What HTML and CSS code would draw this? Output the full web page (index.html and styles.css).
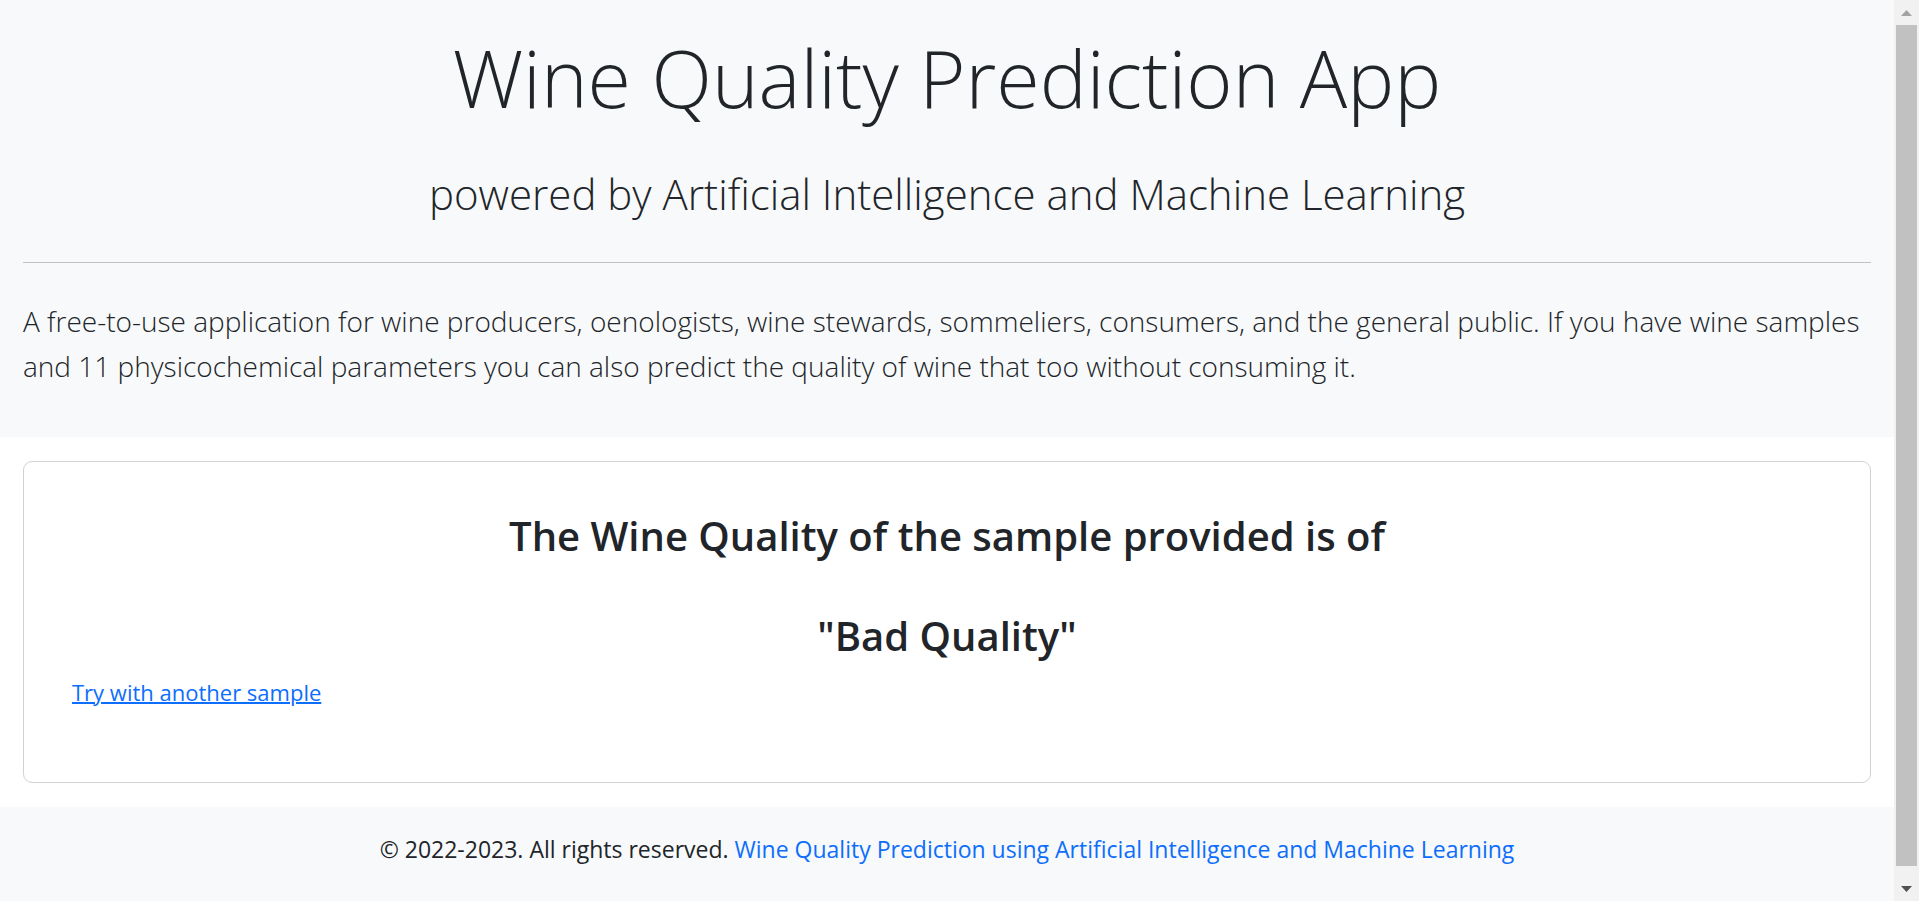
FILE: index.html
```html
<!DOCTYPE html>
<html lang="en">
<head>
<meta charset="utf-8">
<title>Wine Quality Prediction App</title>
<link rel="stylesheet" href="styles.css">
</head>
<body>
<div class="shell">
  <div class="page">
    <header class="hero">
      <h1 class="hero-title">Wine Quality Prediction App</h1>
      <p class="hero-subtitle">powered by Artificial Intelligence and Machine Learning</p>
      <hr class="rule">
      <p class="lead">A free-to-use application for wine producers, oenologists, wine stewards, sommeliers, consumers, and the general public. If you have wine samples and 11 physicochemical parameters you can also predict the quality of wine that too without consuming it.</p>
    </header>
    <main class="main">
      <section class="card">
        <h2 class="result">The Wine Quality of the sample provided is of</h2>
        <h2 class="result">"Bad Quality"</h2>
        <a class="retry" href="#">Try with another sample</a>
      </section>
    </main>
    <footer class="footer">© 2022-2023. All rights reserved. <a class="footer-link" href="#">Wine Quality Prediction using Artificial Intelligence and Machine Learning</a></footer>
  </div>
  <div class="scrollbar" aria-hidden="true">
    <svg class="arrow arrow-up" viewBox="0 0 25 25"><path d="M7 16h11L12.500 10z"/></svg>
    <div class="thumb"></div>
    <svg class="arrow" viewBox="0 0 25 25"><path d="M7 10h11L12.500 16z"/></svg>
  </div>
</div>
</body>
</html>
```
FILE: styles.css
```css
* { box-sizing: border-box; }

body {
  margin: 0;
  font-family: "Open Sans", "Noto Sans", sans-serif;
  font-size: 23px;
  line-height: 36px;
  color: #212529;
  background: #fff;
}

.shell {
  display: grid;
  grid-template-columns: minmax(0, 1fr) 25px;
  min-height: 100vh;
}

.page {
  display: flex;
  flex-direction: column;
}

.hero {
  padding: 23px 23px 48px;
  background: #f8f9fa;
}

.hero-title {
  margin: 0 0 33px;
  font-size: 79px;
  font-weight: 300;
  line-height: 110px;
  text-align: center;
}

.hero-subtitle {
  margin: 0 0 40px;
  font-size: 42px;
  font-weight: 300;
  line-height: 56px;
  text-align: center;
}

.rule {
  height: 1px;
  margin: 0 0 36px;
  border: 0;
  background: #c0c2c4;
}

.lead {
  margin: 0;
  font-size: 28px;
  font-weight: 300;
  line-height: 45px;
}

.main { padding: 24px 23px; }

.card {
  padding: 48px 48px 72px;
  border: 1px solid #d2d2d2;
  border-radius: 9px;
}

.result {
  margin: 0 0 48px;
  font-size: 40px;
  font-weight: 600;
  line-height: 52px;
  text-align: center;
}

.result + .result { margin-bottom: 12px; }

.retry {
  font-size: 22px;
  color: #0d6efd;
  text-decoration-thickness: 2px;
}

.footer {
  flex: 1;
  padding: 24px 23px;
  text-align: center;
  background: #f8f9fa;
}

.footer-link {
  color: #0d6efd;
  text-decoration: none;
}

.scrollbar {
  position: sticky;
  top: 0;
  display: flex;
  flex-direction: column;
  height: 100vh;
  background: #f1f1f1;
}

.arrow {
  flex: none;
  width: 25px;
  height: 25px;
  fill: #505050;
}

.arrow-up { fill: #a3a3a3; }

.thumb {
  flex: 1;
  margin: 0 2px 10px;
  background: #c1c1c1;
}
```
